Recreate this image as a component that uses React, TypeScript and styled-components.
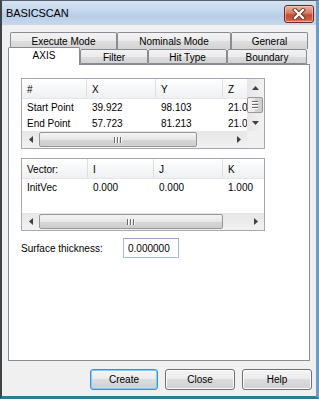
import React from "react";
import styled, { createGlobalStyle } from "styled-components";

const GlobalStyle = createGlobalStyle`
  html, body { margin: 0; padding: 0; }
  body {
    width: 319px; height: 399px; overflow: hidden;
    font-family: "Liberation Sans", Arial, sans-serif;
    font-size: 10px; color: #000;
  }
  #root { width: 319px; height: 399px; }
  * { box-sizing: border-box; }
`;

const Window = styled.div`
  width: 319px;
  height: 399px;
  display: flex;
  flex-direction: column;
  background: #f0f0f0;
  border-top: 1px solid #55606c;
  border-left: 2px solid #3e4348;
  border-right: 3px solid #6f9cc6;
  border-bottom: 3px solid #2c7f91;
`;

const TitleBar = styled.div`
  height: 24px;
  flex: none;
  display: flex;
  align-items: center;
  justify-content: space-between;
  padding: 0 2px 0 4px;
  background: linear-gradient(180deg, #d4e3f3 0%, #c1d5eb 45%, #b8cde6 60%, #c6d8ec 100%);
`;

const Title = styled.span`
  font-size: 11px;
  color: #000;
  letter-spacing: -0.1px;
`;

const CloseBtn = styled.div`
  width: 30px;
  height: 18px;
  margin-top: 1px;
  border: 1px solid #6e2a1e;
  border-radius: 3px;
  display: flex;
  align-items: center;
  justify-content: center;
  background: linear-gradient(180deg, #eab2a3 0%, #d77a63 45%, #c44a30 55%, #cf5a3e 85%, #e08a6d 100%);
  box-shadow: inset 0 0 0 1px rgba(255, 220, 210, 0.5);
`;

const Client = styled.div`
  flex: 1;
  display: flex;
  flex-direction: column;
  padding: 7px 0 0 0;
`;

const TabControl = styled.div`
  margin: 0 6px;
  display: flex;
  flex-direction: column;
`;

const TabRow = styled.div<{ $indent: number; $overlap: number }>`
  display: flex;
  align-items: flex-end;
  height: 17px;
  margin-left: ${(p) => p.$indent}px;
  margin-top: ${(p) => -p.$overlap}px;
`;

const Tab = styled.div<{ $w: number; $active?: boolean }>`
  width: ${(p) => p.$w}px;
  height: ${(p) => (p.$active ? 18 : p.$w ? 15 : 15)}px;
  margin-bottom: ${(p) => (p.$active ? -1 : 0)}px;
  position: relative;
  z-index: ${(p) => (p.$active ? 2 : 1)};
  border: 1px solid #898c95;
  border-bottom: ${(p) => (p.$active ? "none" : "1px solid #898c95")};
  border-radius: 2px 2px 0 0;
  background: ${(p) =>
    p.$active
      ? "#ffffff"
      : "linear-gradient(180deg, #f3f3f3 0%, #ebebeb 50%, #dedede 51%, #d3d3d3 100%)"};
  display: flex;
  align-items: center;
  justify-content: center;
  padding-top: ${(p) => (p.$active ? 0 : 1)}px;
  padding-bottom: ${(p) => (p.$active ? 3 : 0)}px;
  font-size: 10px;
  white-space: nowrap;
`;

const TopTab = styled(Tab)`
  height: 17px;
  border-bottom: none;
`;

const Panel = styled.div`
  height: 297px;
  background: #ffffff;
  border: 1px solid #898c95;
  padding: 13px 0 0 12px;
  display: flex;
  flex-direction: column;
`;

const ListBox = styled.div<{ $h: number; $vscroll?: boolean }>`
  width: 244px;
  height: ${(p) => p.$h}px;
  border: 1px solid #a5a8ae;
  display: grid;
  grid-template-columns: ${(p) => (p.$vscroll ? "1fr 17px" : "1fr")};
  grid-template-rows: 1fr 17px;
  background: #fff;
  overflow: hidden;
`;

const ListContent = styled.div`
  overflow: hidden;
  min-width: 0;
`;

const HeaderRow = styled.div`
  display: flex;
  height: 20px;
  width: 400px;
  background: linear-gradient(180deg, #ffffff 0%, #f7f8f9 45%, #eef0f2 100%);
  border-bottom: 1px solid #e4e6e9;
`;

const HeaderCell = styled.div<{ $w: number }>`
  width: ${(p) => p.$w}px;
  flex: none;
  padding-left: 5px;
  padding-top: 1px;
  display: flex;
  align-items: center;
  border-right: 1px solid #dcdfe3;
  white-space: nowrap;
  overflow: hidden;
`;

const DataRow = styled.div`
  display: flex;
  height: 16px;
  width: 400px;
`;

const Cell = styled.div<{ $w: number }>`
  width: ${(p) => p.$w}px;
  flex: none;
  padding-left: 5px;
  display: flex;
  align-items: center;
  white-space: nowrap;
  overflow: hidden;
`;

const VScroll = styled.div`
  display: flex;
  flex-direction: column;
  background: linear-gradient(90deg, #e6e6e6 0%, #f2f2f2 100%);
`;

const HScroll = styled.div`
  display: flex;
  background: linear-gradient(180deg, #e6e6e6 0%, #f2f2f2 100%);
`;

const ArrowBtn = styled.div`
  width: 17px;
  height: 17px;
  flex: none;
  display: flex;
  align-items: center;
  justify-content: center;
`;

const VThumb = styled.div`
  height: 16px;
  margin: 1px 1px 1px 0;
  border: 1px solid #979797;
  border-radius: 2px;
  background: linear-gradient(90deg, #f4f4f4 0%, #e6e6e6 50%, #d6d6d6 51%, #cecece 100%);
  display: flex;
  flex-direction: column;
  align-items: center;
  justify-content: center;
  gap: 1px;
`;

const HThumb = styled.div<{ $w: number }>`
  width: ${(p) => p.$w}px;
  flex: none;
  margin: 1px 0 1px 0;
  border: 1px solid #979797;
  border-radius: 2px;
  background: linear-gradient(180deg, #f4f4f4 0%, #e6e6e6 50%, #d6d6d6 51%, #cecece 100%);
  display: flex;
  align-items: center;
  justify-content: center;
  gap: 1px;
`;

const Track = styled.div`
  flex: 1;
`;

const GripH = styled.div`
  width: 6px;
  height: 1px;
  background: #6b6b6b;
  box-shadow: 0 1px 0 #fff;
  margin-bottom: 1px;
`;

const GripV = styled.div`
  width: 1px;
  height: 6px;
  background: #6b6b6b;
  box-shadow: 1px 0 0 #fff;
  margin-right: 1px;
`;

const Corner = styled.div`
  background: #f0f0f0;
`;

const FieldRow = styled.div`
  display: flex;
  align-items: center;
  margin-top: 7px;
`;

const Label = styled.span`
  width: 102px;
  font-size: 10px;
`;

const TextBox = styled.div`
  width: 56px;
  height: 20px;
  border: 1px solid #a9bcd6;
  border-top-color: #8fa6c6;
  background: #fff;
  padding-left: 4px;
  display: flex;
  align-items: center;
  font-size: 10px;
`;

const ButtonRow = styled.div`
  display: flex;
  justify-content: flex-end;
  padding: 8px 4px 0 0;
  gap: 7px;
`;

const Button = styled.div<{ $w: number; $default?: boolean }>`
  width: ${(p) => p.$w}px;
  height: 21px;
  border: 1px solid ${(p) => (p.$default ? "#3c8fd0" : "#707070")};
  border-radius: 3px;
  background: linear-gradient(180deg, #f4f4f4 0%, #ececec 45%, #dcdcdc 50%, #d0d0d0 100%);
  box-shadow: ${(p) =>
    p.$default ? "inset 0 0 0 1px #7fd0f4" : "inset 0 0 0 1px #fbfbfb"};
  display: flex;
  align-items: center;
  justify-content: center;
  font-size: 10px;
`;

const Arrow = ({ dir }: { dir: "up" | "down" | "left" | "right" }) => {
  const pts = {
    up: "0,4 7,4 3.5,0",
    down: "0,0 7,0 3.5,4",
    left: "4,0 4,7 0,3.5",
    right: "0,0 0,7 4,3.5",
  }[dir];
  const vertical = dir === "up" || dir === "down";
  return (
    <svg width={vertical ? 7 : 4} height={vertical ? 4 : 7} viewBox={vertical ? "0 0 7 4" : "0 0 4 7"}>
      <polygon points={pts} fill="#404040" />
    </svg>
  );
};

type Col = { label: string; w: number };

const ListView = ({
  cols,
  rows,
  h,
  vscroll,
  thumb,
}: {
  cols: Col[];
  rows: string[][];
  h: number;
  vscroll?: boolean;
  thumb: number;
}) => (
  <ListBox $h={h} $vscroll={vscroll}>
    <ListContent>
      <HeaderRow>
        {cols.map((c) => (
          <HeaderCell key={c.label} $w={c.w}>
            {c.label}
          </HeaderCell>
        ))}
      </HeaderRow>
      {rows.map((r, i) => (
        <DataRow key={i}>
          {r.map((v, j) => (
            <Cell key={j} $w={cols[j].w}>
              {v}
            </Cell>
          ))}
        </DataRow>
      ))}
    </ListContent>
    {vscroll && (
      <VScroll>
        <ArrowBtn>
          <Arrow dir="up" />
        </ArrowBtn>
        <VThumb>
          <GripH />
          <GripH />
          <GripH />
        </VThumb>
        <ArrowBtn>
          <Arrow dir="down" />
        </ArrowBtn>
      </VScroll>
    )}
    <HScroll>
      <ArrowBtn>
        <Arrow dir="left" />
      </ArrowBtn>
      <HThumb $w={thumb}>
        <GripV />
        <GripV />
        <GripV />
      </HThumb>
      <Track />
      <ArrowBtn>
        <Arrow dir="right" />
      </ArrowBtn>
    </HScroll>
    {vscroll && <Corner />}
  </ListBox>
);

export default function App() {
  return (
    <>
      <GlobalStyle />
      <Window>
        <TitleBar>
          <Title>BASICSCAN</Title>
          <CloseBtn>
            <svg width="14" height="12" viewBox="0 0 14 12">
              <path d="M3 2 L11 10 M11 2 L3 10" stroke="#5a2a22" strokeWidth="4" strokeLinecap="square" />
              <path d="M3 2 L11 10 M11 2 L3 10" stroke="#ffffff" strokeWidth="2.4" strokeLinecap="square" />
            </svg>
          </CloseBtn>
        </TitleBar>
        <Client>
          <TabControl>
            <TabRow $indent={2} $overlap={0}>
              <TopTab $w={107}>Execute Mode</TopTab>
              <TopTab $w={114}>Nominals Mode</TopTab>
              <TopTab $w={77}>General</TopTab>
            </TabRow>
            <TabRow $indent={0} $overlap={2}>
              <Tab $w={72} $active>
                AXIS
              </Tab>
              <Tab $w={68}>Filter</Tab>
              <Tab $w={79}>Hit Type</Tab>
              <Tab $w={80}>Boundary</Tab>
            </TabRow>
            <Panel>
              <ListView
                h={71}
                vscroll
                thumb={158}
                cols={[
                  { label: "#", w: 65 },
                  { label: "X", w: 69 },
                  { label: "Y", w: 67 },
                  { label: "Z", w: 80 },
                ]}
                rows={[
                  ["Start Point", "39.922", "98.103", "21.000"],
                  ["End Point", "57.723", "81.213", "21.000"],
                ]}
              />
              <div style={{ height: 9 }} />
              <ListView
                h={73}
                thumb={184}
                cols={[
                  { label: "Vector:", w: 66 },
                  { label: "I", w: 66 },
                  { label: "J", w: 69 },
                  { label: "K", w: 80 },
                ]}
                rows={[["InitVec", "0.000", "0.000", "1.000"]]}
              />
              <FieldRow>
                <Label>Surface thickness:</Label>
                <TextBox>0.000000</TextBox>
              </FieldRow>
            </Panel>
          </TabControl>
          <ButtonRow>
            <Button $w={68} $default>
              Create
            </Button>
            <Button $w={70}>Close</Button>
            <Button $w={70}>Help</Button>
          </ButtonRow>
        </Client>
      </Window>
    </>
  );
}
